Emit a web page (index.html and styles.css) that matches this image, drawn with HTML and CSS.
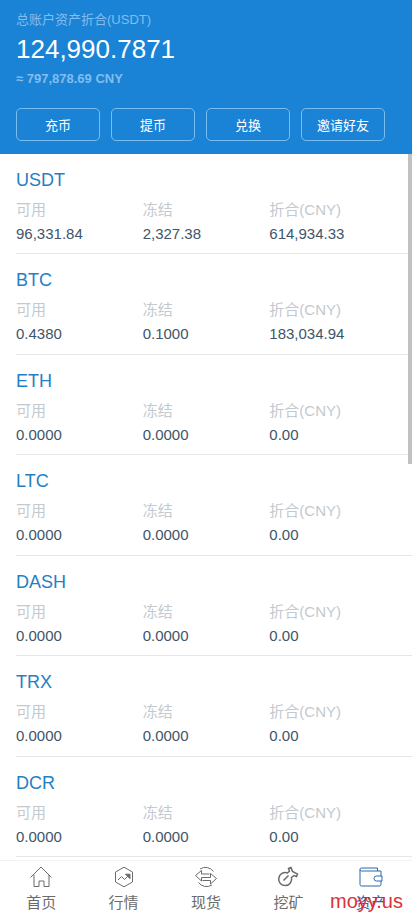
FILE: index.html
```html
<!DOCTYPE html>
<html lang="zh-CN">
<head>
    <meta charset="UTF-8">
    <meta name="viewport" content="width=device-width, initial-scale=1.0">
    <title>资产</title>
    <link rel="stylesheet" href="styles.css">
</head>
<body>

<header class="summary">
    <p class="summary-label">总账户资产折合(USDT)</p>
    <h1 class="summary-total">124,990.7871</h1>
    <p class="summary-cny">≈ 797,878.69 CNY</p>
    <div class="actions">
        <button type="button">充币</button>
        <button type="button">提币</button>
        <button type="button">兑换</button>
        <button type="button">邀请好友</button>
    </div>
</header>

<main class="coins">
    <section class="coin">
        <h2>USDT</h2>
        <dl>
            <div><dt>可用</dt><dd>96,331.84</dd></div>
            <div><dt>冻结</dt><dd>2,327.38</dd></div>
            <div><dt>折合(CNY)</dt><dd>614,934.33</dd></div>
        </dl>
    </section>
    <section class="coin">
        <h2>BTC</h2>
        <dl>
            <div><dt>可用</dt><dd>0.4380</dd></div>
            <div><dt>冻结</dt><dd>0.1000</dd></div>
            <div><dt>折合(CNY)</dt><dd>183,034.94</dd></div>
        </dl>
    </section>
    <section class="coin">
        <h2>ETH</h2>
        <dl>
            <div><dt>可用</dt><dd>0.0000</dd></div>
            <div><dt>冻结</dt><dd>0.0000</dd></div>
            <div><dt>折合(CNY)</dt><dd>0.00</dd></div>
        </dl>
    </section>
    <section class="coin">
        <h2>LTC</h2>
        <dl>
            <div><dt>可用</dt><dd>0.0000</dd></div>
            <div><dt>冻结</dt><dd>0.0000</dd></div>
            <div><dt>折合(CNY)</dt><dd>0.00</dd></div>
        </dl>
    </section>
    <section class="coin">
        <h2>DASH</h2>
        <dl>
            <div><dt>可用</dt><dd>0.0000</dd></div>
            <div><dt>冻结</dt><dd>0.0000</dd></div>
            <div><dt>折合(CNY)</dt><dd>0.00</dd></div>
        </dl>
    </section>
    <section class="coin">
        <h2>TRX</h2>
        <dl>
            <div><dt>可用</dt><dd>0.0000</dd></div>
            <div><dt>冻结</dt><dd>0.0000</dd></div>
            <div><dt>折合(CNY)</dt><dd>0.00</dd></div>
        </dl>
    </section>
    <section class="coin">
        <h2>DCR</h2>
        <dl>
            <div><dt>可用</dt><dd>0.0000</dd></div>
            <div><dt>冻结</dt><dd>0.0000</dd></div>
            <div><dt>折合(CNY)</dt><dd>0.00</dd></div>
        </dl>
    </section>
    <div class="scroll-thumb"></div>
</main>

<nav class="tabbar">
    <a href="#home">
        <svg viewBox="0 0 24 24"><path d="M1.500 12.500 12 2l10.500 10.500M5 10v11.500h5V16h5v5.500h5V10"/></svg>
        <span>首页</span>
    </a>
    <a href="#market">
        <svg viewBox="0 0 24 24"><path d="M12 2.200 20.500 7v10L12 21.800 3.500 17V7zM6 15l3.500-3.500 3 3L17 10"/><path class="solid" d="M13.500 9.200H18v4.500z"/></svg>
        <span>行情</span>
    </a>
    <a href="#spot">
        <svg viewBox="0 0 24 24"><path d="M6 4A10 10 0 0 1 19.500 6.500M18 20A10 10 0 0 1 4.500 17.500M15.500 9H7.500V5.500L1.500 10.500 7.500 16V12.500H12M8.500 15.500H16.500V19L22.500 13.500 16.500 8.500V12.500H12"/></svg>
        <span>现货</span>
    </a>
    <a href="#mining">
        <svg class="bold" viewBox="0 0 24 24"><path d="M11.500 8A6.500 6.500 0 1 0 15.500 12.500L18 10.500 20.500 11.500 21.500 9 16.500 6.500 15 2.500 12.500 3.500 13.500 6zM7.500 15.500l5-5"/></svg>
        <span>挖矿</span>
    </a>
    <a href="#assets" class="active">
        <svg viewBox="0 0 24 24"><path d="M18.500 6V3H2.500A1.500 1.500 0 0 0 1 4.500V19.500A1.500 1.500 0 0 0 2.500 21H20.500A1.500 1.500 0 0 0 22 19.500V16M1 4.500A1.500 1.500 0 0 0 2.500 6H22v5M23 11h-5.500a2.500 2.500 0 0 0 0 5H23z"/></svg>
        <span>资产</span>
    </a>
    <div class="watermark">moyy.us</div>
</nav>

</body>
</html>
```
FILE: styles.css
```css
* {
    box-sizing: border-box;
    margin: 0;
    padding: 0;
}

body {
    display: flex;
    flex-direction: column;
    min-height: 100vh;
    background: #fff;
    font-family: "Liberation Sans", Arial, "Noto Sans CJK SC", sans-serif;
}

.summary {
    padding: 10px 16px 13px;
    background: #1a83d6;
    color: #fff;
}

.summary-label,
.summary-cny {
    font-size: 13px;
    line-height: 20px;
    color: #82bdee;
}

.summary-cny {
    font-weight: bold;
}

.summary-total {
    font-size: 26px;
    font-weight: normal;
    line-height: 39px;
}

.actions {
    display: flex;
    gap: 11px;
    margin-top: 19px;
}

.actions button {
    width: 84px;
    height: 33px;
    border: 1px solid #79bdf0;
    border-radius: 5px;
    background: transparent;
    color: #fff;
    font-family: inherit;
    font-size: 13px;
    cursor: pointer;
}

/* Coin list: rows share the space between header and tab bar */
.coins {
    position: relative;
    flex: 1;
    display: grid;
    grid-auto-rows: 1fr;
    padding: 0 0 3px 16px;
}

.coin {
    padding: 14px 16px 7px 0;
    border-bottom: 1px solid #e4e6e8;
}

.coin h2 {
    font-size: 18px;
    font-weight: normal;
    line-height: 24px;
    color: #2580c3;
}

.coin dl {
    display: grid;
    grid-template-columns: repeat(3, 1fr);
    padding-top: 6px;
    font-size: 15px;
    line-height: 24px;
}

.coin dt {
    color: #c3c9cf;
}

.coin dd {
    color: #405568;
}

.scroll-thumb {
    position: absolute;
    top: 0;
    right: 0;
    width: 4px;
    height: 310px;
    background: #c1c1c1;
}

.tabbar {
    position: relative;
    display: flex;
    height: 55px;
    border-top: 1px solid #f3f3f3;
}

.tabbar a {
    flex: 1;
    display: flex;
    flex-direction: column;
    align-items: center;
    padding-top: 4px;
    font-size: 15px;
    line-height: 28px;
    color: #6b6b6b;
    text-decoration: none;
}

.tabbar a.active {
    color: #2968ad;
}

.tabbar svg {
    width: 24px;
    height: 24px;
    flex-shrink: 0;
    fill: none;
    stroke: currentColor;
    stroke-width: 1;
}

.tabbar .bold {
    stroke-width: 1.5;
}

.tabbar .solid {
    fill: currentColor;
}

.watermark {
    position: absolute;
    right: 9px;
    bottom: 2px;
    font-size: 20px;
    line-height: 24px;
    color: #dc3238;
}
```
